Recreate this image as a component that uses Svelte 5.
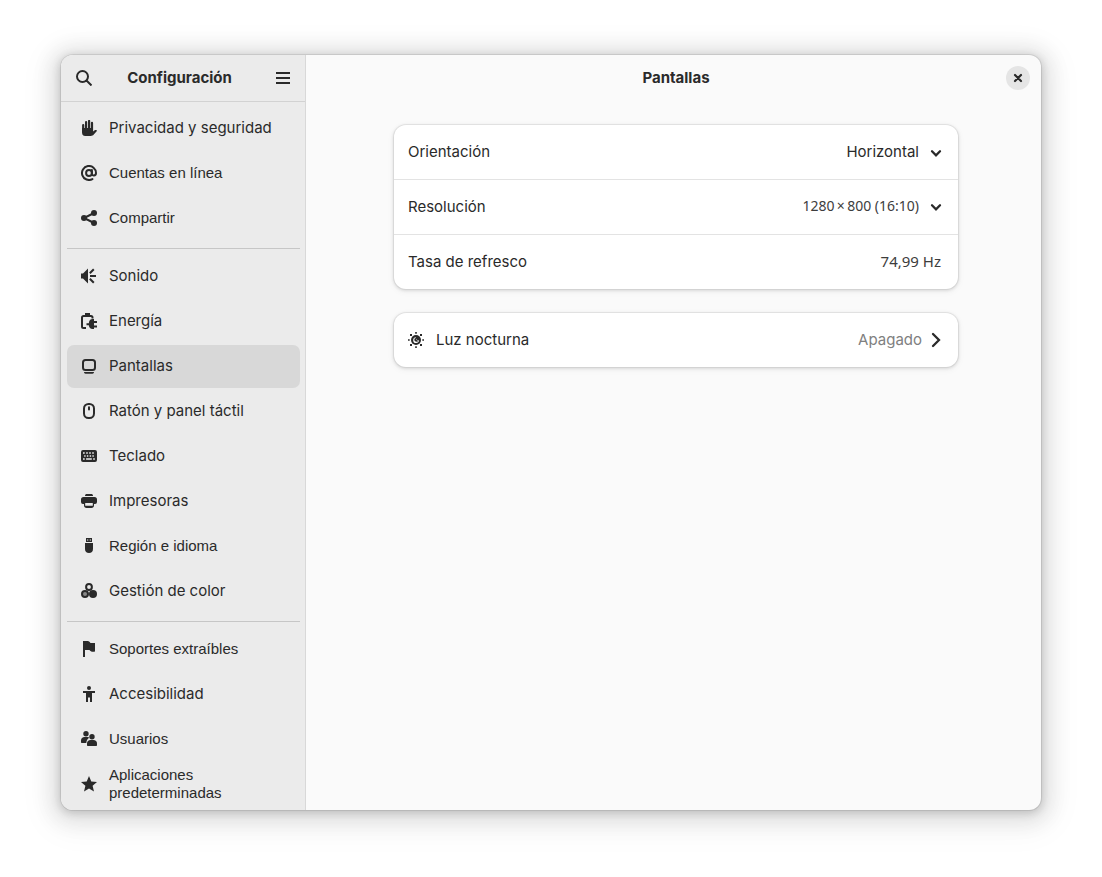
<script lang="ts">
  type Item = { id: string; label: string; narrow?: boolean };

  const groups: Item[][] = [
    [
      { id: 'privacy', label: 'Privacidad y seguridad' },
      { id: 'accounts', label: 'Cuentas en línea', narrow: true },
      { id: 'share', label: 'Compartir', narrow: true },
    ],
    [
      { id: 'sound', label: 'Sonido' },
      { id: 'power', label: 'Energía' },
      { id: 'displays', label: 'Pantallas' },
      { id: 'mouse', label: 'Ratón y panel táctil' },
      { id: 'keyboard', label: 'Teclado' },
      { id: 'printers', label: 'Impresoras' },
      { id: 'usb', label: 'Región e idioma', narrow: true },
      { id: 'color', label: 'Gestión de color' },
    ],
    [
      { id: 'flag', label: 'Soportes extraíbles', narrow: true },
      { id: 'access', label: 'Accesibilidad' },
      { id: 'users', label: 'Usuarios', narrow: true },
      { id: 'star', label: 'Aplicaciones predeterminadas', narrow: true },
    ],
  ];

  let selected = $state('displays');
  let orientation = $state('Horizontal');
  let resolution = $state('1280x800');
</script>

{#snippet icon(id: string)}
  <svg class="icon" viewBox="0 0 16 16" aria-hidden="true">
    {#if id === 'privacy'}
      <path
        d="M2.2 5v7M5.1 2v8M8.1 1v9M11 2.8v8"
        fill="none"
        stroke="currentColor"
        stroke-width="2.2"
        stroke-linecap="round"
      />
      <path d="M1.1 8H12v3.500l1.700-1.200c.8-.6 2.600-.2 2.200.8L12.800 14.600c-.9 1-1.800 1.400-3 1.400H4.200c-1.800 0-3.100-1.200-3.100-3z" />
    {:else if id === 'accounts'}
      <g fill="none" stroke="currentColor" stroke-width="2" stroke-linecap="round">
        <circle cx="8" cy="8" r="2.900" />
        <path d="M10.900 5v3.600c0 2.700 4.100 2.500 4.100-.6a7 7 0 1 0-3.600 6.100" />
      </g>
    {:else if id === 'share'}
      <path d="M13 3 3 8l10 5" fill="none" stroke="currentColor" stroke-width="2" />
      <circle cx="3" cy="8" r="3" />
      <circle cx="13" cy="3" r="3" />
      <circle cx="13" cy="13" r="3" />
    {:else if id === 'sound'}
      <path d="M0 5.500h2L7 .5v15l-5-5H0z" />
      <path
        d="M8.800 5.300 12.800 1.300M9 8h6M8.800 10.700l4 4"
        fill="none"
        stroke="currentColor"
        stroke-width="2"
      />
    {:else if id === 'power'}
      <path
        d="M11.500 5.500V4.500a1.500 1.500 0 0 0-1.500-1.500H2.500A1.500 1.500 0 0 0 1 4.500v9A1.500 1.500 0 0 0 2.500 15H5"
        fill="none"
        stroke="currentColor"
        stroke-width="2"
      />
      <path d="M4 0h5v3H4zM11.500 6H13v2h3v2h-3v2.500h3v2h-3V16h-1.500C9.500 16 8 14.500 7.800 12.200H5.500v-2h2.300C8 7.500 9.500 6 11.500 6z" />
    {:else if id === 'displays'}
      <rect x="2" y="2" width="12" height="10" rx="2.500" fill="none" stroke="currentColor" stroke-width="2" />
      <path d="M3 14h10c0 1-.7 1.700-1.500 1.700h-7C3.700 15.700 3 15 3 14z" />
    {:else if id === 'mouse'}
      <rect x="3" y="1" width="10" height="14" rx="4.500" fill="none" stroke="currentColor" stroke-width="2" />
      <path d="M8 4.200v2.300" stroke="currentColor" stroke-width="2" stroke-linecap="round" />
    {:else if id === 'keyboard'}
      <path
        fill-rule="evenodd"
        d="M2 2h12a2 2 0 0 1 2 2v8a2 2 0 0 1-2 2H2a2 2 0 0 1-2-2V4a2 2 0 0 1 2-2zM2 4.200v1.600h1.700V4.200zm3.200 0v1.600h1.600V4.200zm3 0v1.600h1.600V4.200zm3 0v1.600h1.600V4.200zM3.200 7.200v1.600h1.400V7.200zm2.700 0v1.600h1.400V7.200zm2.800 0v1.600h1.400V7.200zm2.700 0v1.600h1.400V7.200zM2 10.200v1.600h1.700v-1.600zm3.100 0v1.600h5.700v-1.600zm7.100 0v1.600h1.600v-1.600z"
      />
    {:else if id === 'printers'}
      <path d="M4 3c0-1.400.6-2 2-2h4c1.400 0 2 .6 2 2z" />
      <path
        fill-rule="evenodd"
        d="M2.500 4h11A2.500 2.500 0 0 1 16 6.500V9a2 2 0 0 1-2 2h-1v1.500c0 1.500-1 2.500-2.500 2.500h-5C4 15 3 14 3 12.500V11H2a2 2 0 0 1-2-2V6.500A2.500 2.500 0 0 1 2.500 4zM4.200 10v2.800h7.600V10z"
      />
    {:else if id === 'usb'}
      <path fill-rule="evenodd" d="M5 0h6v4H5zM6 1.500v1h1.300v-1zm2.700 0v1H10v-1z" />
      <path d="M4 5h8v6c0 2.500-1.500 4-4 4s-4-1.500-4-4z" />
    {:else if id === 'color'}
      <circle cx="8" cy="4" r="2.900" fill="none" stroke="currentColor" stroke-width="2" />
      <circle cx="4" cy="11" r="3" fill="#888" stroke="currentColor" stroke-width="2" />
      <circle cx="12" cy="11" r="4" />
    {:else if id === 'flag'}
      <path d="M2 0h2c2.500-.6 4.500.2 5.500 2H14v8.500c-2.500.8-4.500.2-5.500-1.500H4v7H2z" />
    {:else if id === 'access'}
      <circle cx="8" cy="2" r="2" />
      <path d="M2 5h12v2h-3v9H9v-4.500H7V16H5V7H2z" />
    {:else if id === 'users'}
      <circle cx="5" cy="2.800" r="2.700" />
      <circle cx="11" cy="5.800" r="2.700" />
      <path d="M0 11V9.500C0 7.500 1.500 6 3.500 6h3c.7 0 1.300.2 1.800.6C7 8 5.500 9 5.300 12H1c-.6 0-1-.4-1-1z" />
      <path d="M6 14v-1.500C6 10.500 7.500 9 9.500 9h3c2 0 3.500 1.500 3.500 3.500V14c0 .6-.4 1-1 1H7c-.6 0-1-.4-1-1z" />
    {:else if id === 'star'}
      <path d="m8 0 2.300 5.500 5.700.4-4.400 3.900L13 15.500l-5-3.100-5 3.100 1.400-5.700L0 5.900l5.700-.4z" />
    {:else if id === 'night'}
      <circle cx="8" cy="8" r="5" />
      <path d="M8 5.200a2.900 2.900 0 1 0 3 3A2.400 2.400 0 0 1 8 5.200z" fill="#fff" />
      <path d="M7.800 5.600a3 3 0 0 0 2.900 3.200 3 3 0 0 1-4 .3 2.700 2.700 0 0 1 1.100-3.500z" />
      <path d="M7.200 0h1.600v1.700H7.200zM7.200 14.300h1.600V16H7.200zM0 7.200h1.700v1.600H0zM14.300 7.200H16v1.600h-1.700zM2 2h2v2H2zM12 2h2v2h-2zM2 12h2v2H2zM12 12h2v2h-2z" />
    {:else if id === 'search'}
      <path d="M6.500 1a5.500 5.500 0 1 0 0 11 5.500 5.500 0 0 0 0-11zM10.500 10.500l5 5" fill="none" stroke="currentColor" stroke-width="2" />
    {:else if id === 'menu'}
      <path d="M1 3h14M1 8h14M1 13h14" stroke="currentColor" stroke-width="2" />
    {:else if id === 'close'}
      <path d="m5 5 6 6m0-6-6 6" stroke="currentColor" stroke-width="2.200" stroke-linecap="round" />
    {:else if id === 'down'}
      <path d="m4 6.300 4 4 4-4" fill="none" stroke="currentColor" stroke-width="2.300" stroke-linecap="round" />
    {:else if id === 'next'}
      <path d="m5 2 6 6-6 6" fill="none" stroke="currentColor" stroke-width="2.300" stroke-linecap="round" />
    {/if}
  </svg>
{/snippet}

<div class="window">
  <aside class="sidebar">
    <header class="sidebar-header">
      <button type="button" class="flat" aria-label="Buscar">{@render icon('search')}</button>
      <h2>Configuración</h2>
      <button type="button" class="flat" aria-label="Menú">{@render icon('menu')}</button>
    </header>
    <nav>
      {#each groups as group, i}
        {#if i > 0}<hr />{/if}
        {#each group as item (item.id)}
          <a
            href="#{item.id}"
            class:active={selected === item.id}
            class:narrow={item.narrow}
            aria-current={selected === item.id ? 'page' : undefined}
            onclick={() => (selected = item.id)}
          >
            {@render icon(item.id)}
            <span>{item.label}</span>
          </a>
        {/each}
      {/each}
    </nav>
  </aside>

  <main>
    <header class="main-header">
      <h1>Pantallas</h1>
      <button type="button" class="close" aria-label="Cerrar">{@render icon('close')}</button>
    </header>
    <div class="panel">
      <section class="card">
        <div class="row">
          <label for="orientation">Orientación</label>
          <div class="select">
            <select id="orientation" bind:value={orientation}>
              <option>Horizontal</option>
              <option>Vertical</option>
            </select>
            {@render icon('down')}
          </div>
        </div>
        <div class="row">
          <label for="resolution">Resolución</label>
          <div class="select">
            <select id="resolution" class="numeric small" bind:value={resolution}>
              <option value="1280x800">1280&thinsp;×&thinsp;800 (16:10)</option>
              <option value="1024x768">1024&thinsp;×&thinsp;768 (4:3)</option>
            </select>
            {@render icon('down')}
          </div>
        </div>
        <div class="row">
          <span>Tasa de refresco</span>
          <span class="numeric">74,99 Hz</span>
        </div>
      </section>
      <section class="card">
        <button type="button" class="row night">
          {@render icon('night')}
          <span>Luz nocturna</span>
          <span class="status">Apagado</span>
          {@render icon('next')}
        </button>
      </section>
    </div>
  </main>
</div>

<style>
  :global(body) {
    background: #fff;
  }

  .window {
    display: grid;
    grid-template-columns: 245px 1fr;
    margin: 55px 61px 67px;
    border-radius: 12px;
    overflow: hidden;
    background: #fafafa;
    color: #2a2a2a;
    font-family: Inter, "Noto Sans", sans-serif;
    font-size: 15px;
    line-height: 18px;
    box-shadow:
      0 0 0 1px rgba(0, 0, 0, 0.08),
      0 2px 8px 1px rgba(0, 0, 0, 0.16),
      0 3px 20px 10px rgba(0, 0, 0, 0.09),
      0 6px 32px 16px rgba(0, 0, 0, 0.04);
  }

  button {
    border: none;
    padding: 0;
    background: none;
    color: inherit;
    font: inherit;
    cursor: pointer;
  }

  h1,
  h2 {
    margin: 0;
    font-size: 15px;
    font-weight: 700;
  }

  .icon {
    display: block;
    flex: none;
    width: 16px;
    height: 16px;
    fill: currentColor;
  }

  .sidebar {
    background: #ebebeb;
    border-right: 1px solid #d8d8d8;
  }

  .sidebar-header {
    display: flex;
    align-items: center;
    justify-content: space-between;
    height: 46px;
    padding: 0 14px 0 15px;
    border-bottom: 1px solid #d2d2d2;
  }

  .sidebar-header h2 {
    padding-right: 8px;
  }

  nav {
    display: flex;
    flex-direction: column;
    gap: 2px;
    padding: 5px 5px 4px 6px;
  }

  nav a {
    display: flex;
    align-items: center;
    gap: 12px;
    height: 42px;
    padding: 0 14px 1px;
    border-radius: 7px;
    color: inherit;
    text-decoration: none;
  }

  nav a:hover {
    background: #e2e2e2;
  }

  nav a.active {
    background: #d8d8d8;
  }

  nav a.narrow {
    font-family: "Liberation Sans", Arial, sans-serif;
  }

  hr {
    width: 100%;
    height: 1px;
    margin: 6px 0 4px;
    border: none;
    background: #c6c6c6;
  }

  .main-header {
    display: grid;
    grid-template-columns: 1fr auto 1fr;
    align-items: center;
    height: 46px;
    padding: 0 11px 0 16px;
  }

  .main-header h1 {
    grid-column: 2;
  }

  .close {
    display: grid;
    place-items: center;
    justify-self: end;
    width: 24px;
    height: 24px;
    border-radius: 50%;
    background: #e5e5e5;
  }

  .panel {
    display: flex;
    flex-direction: column;
    gap: 24px;
    max-width: 564px;
    margin: 0 auto;
    padding: 24px 0 24px 5px;
  }

  .card {
    border-radius: 12px;
    background: #fff;
    box-shadow:
      0 0 0 1px rgba(0, 0, 0, 0.05),
      0 1px 3px 1px rgba(0, 0, 0, 0.1),
      0 2px 6px 2px rgba(0, 0, 0, 0.03);
  }

  .row {
    display: flex;
    align-items: center;
    justify-content: space-between;
    width: 100%;
    height: 54px;
    padding: 0 17px 0 14px;
    box-sizing: border-box;
  }

  .row + .row {
    height: 55px;
    border-top: 1px solid #e3e3e3;
  }

  .select {
    position: relative;
  }

  .select select {
    appearance: none;
    field-sizing: content;
    display: block;
    border: none;
    margin: 0;
    padding: 0 22px 0 0;
    background: none;
    color: inherit;
    font: inherit;
    cursor: pointer;
  }

  .select .icon {
    position: absolute;
    top: 2px;
    right: -3px;
    pointer-events: none;
  }

  .numeric,
  .select select.numeric {
    padding-bottom: 2px;
    color: #3d3d3d;
    font-family: "Noto Sans", sans-serif;
  }

  .select select.small {
    font-size: 14px;
  }

  .night {
    gap: 12px;
    padding-right: 14px;
  }

  .status {
    margin-left: auto;
    color: #808080;
  }

  .night .status + .icon {
    margin-left: -6px;
  }
</style>
